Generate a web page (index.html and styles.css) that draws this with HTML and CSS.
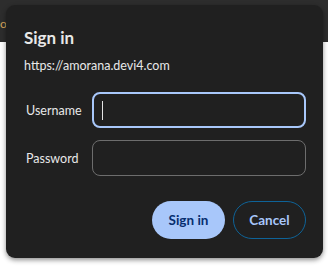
FILE: index.html
```html
<!DOCTYPE html>
<html>
<head>
<meta charset="utf-8">
<link rel="stylesheet" href="styles.css">
</head>
<body>
<div class="page">
  <div class="topbar"><span class="tab-text">ol</span></div>
  <div class="content"></div>
</div>
<div class="dialog">
  <h1 class="title">Sign in</h1>
  <div class="origin">https://amorana.devi4.com</div>
  <div class="form">
    <label class="label">Username</label>
    <div class="input focused"><span class="caret"></span></div>
    <label class="label">Password</label>
    <div class="input"></div>
  </div>
  <div class="actions">
    <button class="btn primary">Sign in</button>
    <button class="btn secondary">Cancel</button>
  </div>
</div>
</body>
</html>
```

FILE: styles.css
```css
* { box-sizing: border-box; }
html, body { margin: 0; padding: 0; }
body {
  width: 328px;
  height: 278px;
  overflow: hidden;
  background: #ffffff;
  font-family: "Segoe UI", Lato, "Noto Sans", sans-serif;
  position: relative;
}
.page { display: flex; flex-direction: column; height: 100%; }
.topbar {
  height: 42px;
  background: #2d2d2d;
  padding: 12px 0 0 0;
}
.tab-text {
  color: #d8a55a;
  font-size: 12px;
  padding-left: 0;
}
.content { flex: 1; background: #ffffff; }
.dialog {
  position: absolute;
  left: 6px;
  top: 5px;
  width: 317px;
  height: 253px;
  background: #202020;
  border-radius: 9px;
  box-shadow: 0 2px 5px rgba(0,0,0,0.45);
  padding: 23px 17px 0 18px;
  color: #e3e3e3;
}
.title {
  margin: 0;
  font-size: 17px;
  font-weight: 700;
  line-height: 20px;
  color: #e8e8e8;
}
.origin {
  margin-top: 9px;
  font-size: 12.5px;
  line-height: 18px;
  color: #e8e8e8;
}
.form {
  margin-top: 17px;
  display: grid;
  grid-template-columns: 68px 214px;
  row-gap: 12px;
  align-items: center;
}
.label {
  font-size: 12.5px;
  color: #e8e8e8;
  padding-left: 2px;
}
.input {
  height: 36px;
  border: 1px solid #6d6d6d;
  border-radius: 8px;
  display: flex;
  align-items: center;
  padding-left: 9px;
}
.input.focused {
  border: 2px solid #a8c7fa;
  padding-left: 8px;
}
.caret {
  width: 1px;
  height: 19px;
  background: #e3e3e3;
}
.actions {
  margin-top: 25px;
  display: flex;
  justify-content: flex-end;
  gap: 8px;
}
.btn {
  height: 38px;
  border-radius: 19px;
  font-family: inherit;
  font-size: 13.5px;
  font-weight: 700;
  padding: 0;
}
.primary {
  width: 73px;
  background: #a8c7fa;
  color: #062e6f;
  border: none;
}
.secondary {
  width: 73px;
  background: transparent;
  color: #a8c7fa;
  border: 1px solid #0e6398;
}
```
